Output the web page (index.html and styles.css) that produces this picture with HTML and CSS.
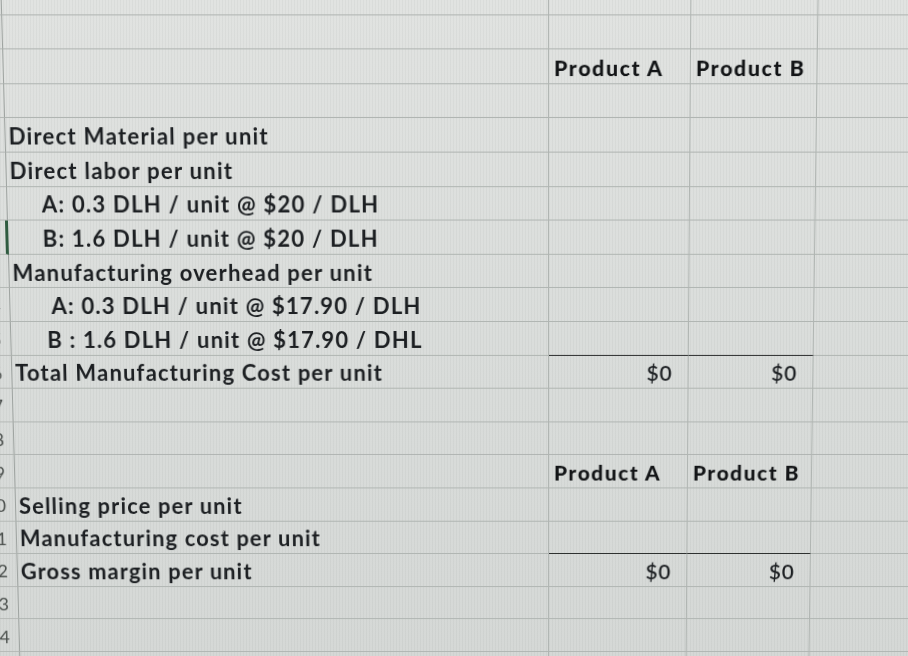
FILE: index.html
```html
<!DOCTYPE html>
<html>
<head>
<meta charset="utf-8">
<title>Sheet</title>
<link rel="stylesheet" href="styles.css">
</head>
<body>
<div class="screen">
  <div class="sheet">
    <div class="row"><div class="rh">5</div><div class="cell a"></div><div class="cell b"></div><div class="cell c"></div><div class="cell d"></div></div>
    <div class="row"><div class="rh">6</div><div class="cell a"></div><div class="cell b"></div><div class="cell c"></div><div class="cell d"></div></div>
    <div class="row"><div class="rh">7</div><div class="cell a"></div><div class="cell b head">Product A</div><div class="cell c head">Product B</div><div class="cell d"></div></div>
    <div class="row"><div class="rh">8</div><div class="cell a"></div><div class="cell b"></div><div class="cell c"></div><div class="cell d"></div></div>
    <div class="row"><div class="rh">9</div><div class="cell a">Direct Material per unit</div><div class="cell b"></div><div class="cell c"></div><div class="cell d"></div></div>
    <div class="row"><div class="rh">10</div><div class="cell a">Direct labor per unit</div><div class="cell b"></div><div class="cell c"></div><div class="cell d"></div></div>
    <div class="row"><div class="rh">11</div><div class="cell a ind-1">A: 0.3 DLH / unit @ $20 / DLH</div><div class="cell b"></div><div class="cell c"></div><div class="cell d"></div></div>
    <div class="row"><div class="rh active">12</div><div class="cell a ind-1">B: 1.6 DLH / unit @ $20 / DLH</div><div class="cell b"></div><div class="cell c"></div><div class="cell d"></div></div>
    <div class="row"><div class="rh">13</div><div class="cell a">Manufacturing overhead per unit</div><div class="cell b"></div><div class="cell c"></div><div class="cell d"></div></div>
    <div class="row"><div class="rh">14</div><div class="cell a ind-2">A: 0.3 DLH / unit @ $17.90 / DLH</div><div class="cell b"></div><div class="cell c"></div><div class="cell d"></div></div>
    <div class="row"><div class="rh">15</div><div class="cell a ind-3">B : 1.6 DLH / unit @ $17.90 / DHL</div><div class="cell b"></div><div class="cell c"></div><div class="cell d"></div></div>
    <div class="row"><div class="rh">16</div><div class="cell a">Total Manufacturing Cost per unit</div><div class="cell b num total">$0</div><div class="cell c num total">$0</div><div class="cell d"></div></div>
    <div class="row"><div class="rh">17</div><div class="cell a"></div><div class="cell b"></div><div class="cell c"></div><div class="cell d"></div></div>
    <div class="row"><div class="rh">18</div><div class="cell a"></div><div class="cell b"></div><div class="cell c"></div><div class="cell d"></div></div>
    <div class="row"><div class="rh">19</div><div class="cell a"></div><div class="cell b head">Product A</div><div class="cell c head">Product B</div><div class="cell d"></div></div>
    <div class="row"><div class="rh">20</div><div class="cell a">Selling price per unit</div><div class="cell b"></div><div class="cell c"></div><div class="cell d"></div></div>
    <div class="row"><div class="rh">21</div><div class="cell a">Manufacturing cost per unit</div><div class="cell b"></div><div class="cell c"></div><div class="cell d"></div></div>
    <div class="row"><div class="rh">22</div><div class="cell a">Gross margin per unit</div><div class="cell b num total">$0</div><div class="cell c num total">$0</div><div class="cell d"></div></div>
    <div class="row"><div class="rh">23</div><div class="cell a"></div><div class="cell b"></div><div class="cell c"></div><div class="cell d"></div></div>
    <div class="row"><div class="rh">24</div><div class="cell a"></div><div class="cell b"></div><div class="cell c"></div><div class="cell d"></div></div>
    <div class="row"><div class="rh">25</div><div class="cell a"></div><div class="cell b"></div><div class="cell c"></div><div class="cell d"></div></div>
  </div>
</div>
</body>
</html>
```

FILE: styles.css
```css
html, body {
  margin: 0;
  padding: 0;
  width: 908px;
  height: 656px;
  overflow: hidden;
  background: #dadddb;
}

.screen {
  width: 908px;
  height: 656px;
  overflow: hidden;
  background-color: #dadddb;
  background-image:
    repeating-linear-gradient(90deg, rgba(40, 50, 45, 0.04) 0 1px, transparent 1px 3px),
    linear-gradient(180deg, #e1e3e1 0%, #d9dcda 60%, #d5d8d6 100%);
}

.sheet {
  margin-left: -35px;
  margin-top: -13.6px;
  width: 1050px;
  font-family: Lato, "Open Sans", sans-serif;
  font-size: 22px;
  font-weight: 700;
  letter-spacing: 1.2px;
  color: #1c1f22;
  transform-origin: 585px 341.6px;
  transform: perspective(1000px) rotateX(-3deg);
}

.row {
  display: grid;
  grid-template-columns: 46px 538px 140px 125px 200px;
  height: 33.6px;
}

.rh {
  box-sizing: border-box;
  border-right: 1px solid #9ea3a0;
  border-bottom: 1px solid #b5b9b6;
  display: flex;
  align-items: center;
  justify-content: flex-end;
  padding-right: 9px;
  padding-top: 2px;
  font-family: Lato, sans-serif;
  font-weight: 400;
  letter-spacing: 0;
  font-size: 18px;
  color: #4a4f4c;
}

.rh.active {
  border-right: 3px solid #2f5b40;
}

.cell {
  box-sizing: border-box;
  border-right: 1px solid #b0b5b2;
  border-bottom: 1px solid #b0b5b2;
  display: flex;
  align-items: center;
  padding-top: 2px;
  white-space: nowrap;
  overflow: visible;
}

.cell.a {
  padding-left: 3px;
}

.cell.a.ind-1 { padding-left: 34px; }
.cell.a.ind-2 { padding-left: 41px; }
.cell.a.ind-3 { padding-left: 36px; }

.cell.head {
  font-weight: 900;
  font-size: 21px;
  letter-spacing: 1.6px;
  padding-left: 5px;
  color: #121416;
}

.cell.num {
  justify-content: flex-end;
  padding-right: 15px;
  font-weight: 600;
  letter-spacing: 1px;
  font-size: 21px;
}

.cell.total {
  border-top: 1.5px solid #2a2d2c;
  margin-top: -1px;
}
```
